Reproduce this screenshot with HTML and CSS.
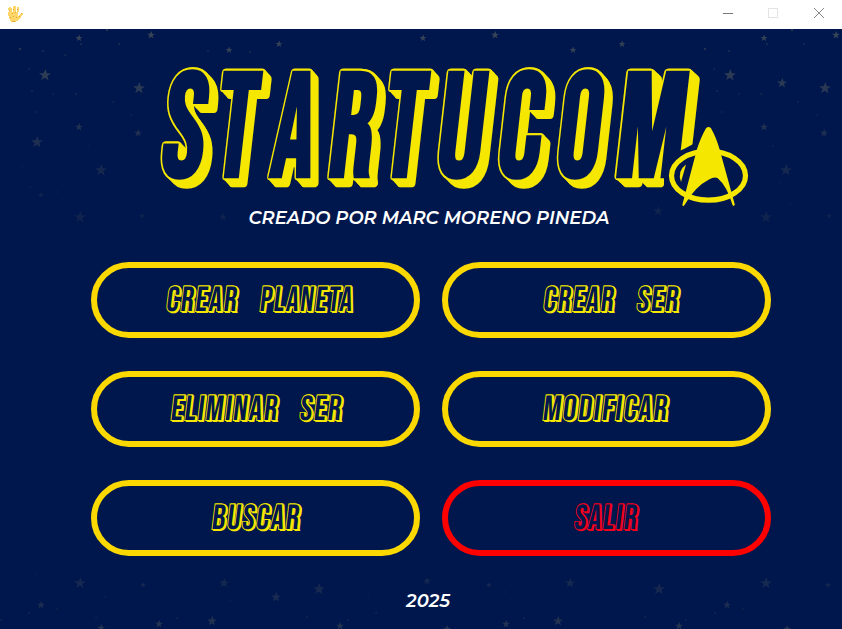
FILE: index.html
```html
<!DOCTYPE html>
<html lang="es">
<head>
<meta charset="utf-8">
<title>StarTucom</title>
<link rel="stylesheet" href="styles.css">
</head>
<body>
<header class="titlebar">
  <svg class="app-icon" viewBox="0 0 16 18"><path fill="#ffd769" d="M2 2h2v1h1v4h1V1h3v6h1V2h2v5h-1v4h1v-1h1V9h1V8h2v2h-1v1h-1v2h-1v1h-1v1h-1v1H9v1H4v-1H3v-2H2v-3H1V7h1V5H1V3h1z"/><path fill="#e8a23a" d="M2 5h1v1H2zM5 8h1v1H5zM8 7h1v1H8zM6 11h1v1H6zM10 4h1v1h-1zM3 12h1v1H3zM12 11h1v1h-1zM9 12h1v1H9zM6 4h1v1H6zM14 8h1v1h-1zM5 16h3v1H5z"/></svg>
  <nav class="controls">
    <svg viewBox="0 0 12 12"><path d="M1 6.5h10" stroke="#777"/></svg>
    <svg viewBox="0 0 12 12"><rect x="0.5" y="1.5" width="9" height="9" fill="none" stroke="#e4e4e4"/></svg>
    <svg viewBox="0 0 12 12"><path d="M1 1l10 10M11 1L1 11" stroke="#888" stroke-width="1"/></svg>
  </nav>
</header>
<main class="screen">
  <svg class="sky" viewBox="0 29 842 600">
    <defs><path id="s" d="M.1-1L.3-.3 1-.25.4.15.6.9 0 .45-.65.85-.4.15-1-.3-.25-.3z"/></defs>
    <g id="stars"></g>
  </svg>
  <svg class="logo" viewBox="0 29 842 178" role="img" aria-label="STARTUCOM">
    <g transform="translate(0 175.500) skewX(-6.5)">
      <text class="logo-text" y="0"><tspan x="159" textLength="42" lengthAdjust="spacingAndGlyphs">S</tspan><tspan x="212" textLength="39" lengthAdjust="spacingAndGlyphs">T</tspan><tspan x="269" textLength="41" lengthAdjust="spacingAndGlyphs">A</tspan><tspan x="326" textLength="44" lengthAdjust="spacingAndGlyphs">R</tspan><tspan x="380" textLength="39" lengthAdjust="spacingAndGlyphs">T</tspan><tspan x="434" textLength="46" lengthAdjust="spacingAndGlyphs">U</tspan><tspan x="495" textLength="43" lengthAdjust="spacingAndGlyphs">C</tspan><tspan x="554" textLength="43" lengthAdjust="spacingAndGlyphs">O</tspan><tspan x="613" textLength="68" lengthAdjust="spacingAndGlyphs">M</tspan></text>
    </g>
    <path fill="#00174d" d="M664 189V168Q670 153 684 149L697 142 706 122H712L725 147Q753 154 753 176 751 205 708 208 676 208 664 189z"/>
    <path class="badge" d="M686 164.5Q677 171 681 182z"/>
    <ellipse cx="708.5" cy="175.7" rx="37" ry="24.5" fill="none" stroke="#f6e700" stroke-width="5.2"/>
    <path class="badge" d="M706 128.3Q708.5 125.5 711 128.3 716 137 719.5 149L734.8 204.5Q734 207 732.5 205 727 186 717.5 178 714 176.5 709 179.5 695 186.500 684.5 205 682.500 207.500 682.400 204.500L697 149Q701 137 706 128.300z"/>
  </svg>
  <svg class="credit" viewBox="0 207 842 22"><text class="caption" x="248.500" y="223.800" textLength="361">CREADO POR MARC MORENO PINEDA</text></svg>
  <section class="menu">
    <button><svg viewBox="97 268 317 64"><g transform="translate(0 310.5) skewX(-7)"><text><tspan x="165.500" textLength="72" lengthAdjust="spacingAndGlyphs">CREAR</tspan> <tspan x="259" textLength="94" lengthAdjust="spacingAndGlyphs">PLANETA</tspan></text></g></svg></button>
    <button><svg viewBox="448 268 317 64"><g transform="translate(0 310.5) skewX(-7)"><text><tspan x="542.500" textLength="72" lengthAdjust="spacingAndGlyphs">CREAR</tspan> <tspan x="636" textLength="43" lengthAdjust="spacingAndGlyphs">SER</tspan></text></g></svg></button>
    <button><svg viewBox="97 268 317 64"><g transform="translate(0 310.5) skewX(-7)"><text><tspan x="170" textLength="108" lengthAdjust="spacingAndGlyphs">ELIMINAR</tspan> <tspan x="299" textLength="43" lengthAdjust="spacingAndGlyphs">SER</tspan></text></g></svg></button>
    <button><svg viewBox="448 268 317 64"><g transform="translate(0 310.5) skewX(-7)"><text><tspan x="542" textLength="126" lengthAdjust="spacingAndGlyphs">MODIFICAR</tspan></text></g></svg></button>
    <button><svg viewBox="97 268 317 64"><g transform="translate(0 310.5) skewX(-7)"><text><tspan x="211" textLength="89" lengthAdjust="spacingAndGlyphs">BUSCAR</tspan></text></g></svg></button>
    <button class="exit"><svg viewBox="448 268 317 64"><g transform="translate(0 310.5) skewX(-7)"><text><tspan x="573.500" textLength="64" lengthAdjust="spacingAndGlyphs">SALIR</tspan></text></g></svg></button>
  </section>
  <svg class="year" viewBox="0 590 842 22"><text class="caption" x="406" y="607" textLength="44">2025</text></svg>
</main>
<script src="stars.js"></script>
</body>
</html>
```
FILE: styles.css
```css
* { box-sizing: border-box; }
body { margin: 0; width: 842px; height: 629px; overflow: hidden; font-family: Roboto, "Liberation Sans", sans-serif; }
svg { display: block; overflow: visible; }
.titlebar { height: 29px; background: #fff; display: flex; justify-content: space-between; padding: 5px 17px 0 7px; }
.app-icon { width: 16px; height: 18px; shape-rendering: crispEdges; }
.controls { display: flex; gap: 33.500px; padding-top: 2px; }
.controls svg { width: 12px; height: 12px; }
.screen { position: relative; height: 600px; background: #00174d; display: flex; flex-direction: column; }
.sky { position: absolute; inset: 0; width: 842px; height: 600px; fill: #9c9765; }
.logo, .credit, .menu, .year { position: relative; }
.logo { width: 842px; height: 178px; }
.credit, .year { width: 842px; height: 22px; }
.badge { fill: #f6e700; }
.logo-text {
  font-family: "Bebas Neue", Roboto, sans-serif;
  font-size: 147px; font-weight: 700; font-stretch: 75%;
  fill: #00174d; stroke: #f6e700; stroke-width: 4px; paint-order: stroke; stroke-linejoin: round;
  text-shadow: 1.400px 1px #f6e700, 2.800px 2px #f6e700, 4.200px 3px #f6e700, 5.600px 4px #f6e700, 7px 5px #f6e700, 8.400px 6px #f6e700, 9.800px 7px #f6e700, 11px 8px #f6e700;
}
.caption { font-family: Montserrat, Lato, sans-serif; font-size: 18px; font-weight: 600; font-style: italic; fill: #fff; }
.menu { margin-top: 33px; padding-left: 91px; display: grid; grid-template-columns: 329px 329px; grid-auto-rows: 76px; gap: 33px 22px; }
.menu button { padding: 0; border: 6px solid #fbd900; border-radius: 38px; background: #00174d; }
.menu svg { width: 317px; height: 64px; }
.menu text {
  font: 400 35px "Bebas Neue", Roboto, sans-serif; font-stretch: 75%; letter-spacing: 2px;
  fill: #00174d; stroke: #f6e700; stroke-width: 1.800px; paint-order: stroke;
  text-shadow: 1px 1px #f6e700, 2px 2px #f6e700;
}
.menu .exit { border-color: #f00; }
.menu .exit text { stroke: #f0001c; text-shadow: 1px 1px #f0001c, 2px 2px #f0001c; }
.year { margin-top: 34px; }
```
FILE: stars.js
```js
// Each star: x, y, radius
const stars = [
  [45,75,6],[139,88,6],[37,142,6],[79,127,4],[138,133,4],[101,170,6],[41,195,3],[80,217,6],[142,216,3],[223,217,4],
  [79,38,3.5],[151,35,4],[229,50,3.5],[279,44,3.5],[423,38,3.5],[495,35,4],[573,50,3.5],[622,44,3.5],[764,38,3.5],[836,35,4],
  [730,75,6],[782,83,5],[825,88,6],[764,127,4],[824,133,4],[786,170,6],[766,217,6],[829,216,3],[658,211,5],
  [80,583,6],[143,585,3],[224,583,5],[276,597,5],[319,589,6],[427,581,4],[489,585,3],[570,583,5],[659,589,6],[766,583,6],[828,585,3],
  [41,605,4],[159,624,4],[212,621,5],[340,626,4],[101,628,4],[506,624,4],[558,621,5],[679,626,4],[727,605,4],[447,629,4],[787,629,4],
  [20,49,1.5],[43,51,1.2],[32,91,1.2],[53,94,1],[76,94,1.2],[65,55,1],[119,44,1.2],[81,44,1.2],[107,30,1.5],[29,69,1],[131,115,1],[88,146,1],[22,166,1],[30,187,1.2],[57,192,1.2],[36,112,1],[113,102,1],[208,51,1],[250,52,1.2],
  [705,49,1.5],[729,51,1.2],[717,91,1.2],[739,94,1],[761,94,1.2],[767,44,1.2],[804,44,1],[792,30,1.5],[714,69,1],[817,115,1],[773,146,1],[722,112,1],[798,102,1],[781,183,1],[790,204,1.2],[715,187,1],
  [29,613,1.2],[57,609,1.2],[1,620,1.2],[177,618,1.2],[307,617,1.2],[348,620,1.2],[376,613,1.2],[96,618,1],[524,618,1.2],[645,617,1.2],[686,620,1.2],[715,613,1.2],[743,609,1.2],[36,574,1],[158,592,1],[230,601,1],[368,595,1],[505,592,1],[105,597,1]
];
const sky = document.getElementById("stars");
for (const [x, y, r] of stars) {
  const star = document.createElementNS("http://www.w3.org/2000/svg", "use");
  star.setAttribute("href", "#s");
  star.setAttribute("transform", `translate(${x} ${y}) scale(${r})`);
  // Stars fade out towards the middle of the screen
  star.setAttribute("opacity", y < 300 ? Math.max(0.1, 0.36 - (y - 29) / 650) : 0.1 + (y - 570) / 450);
  sky.append(star);
}
```
